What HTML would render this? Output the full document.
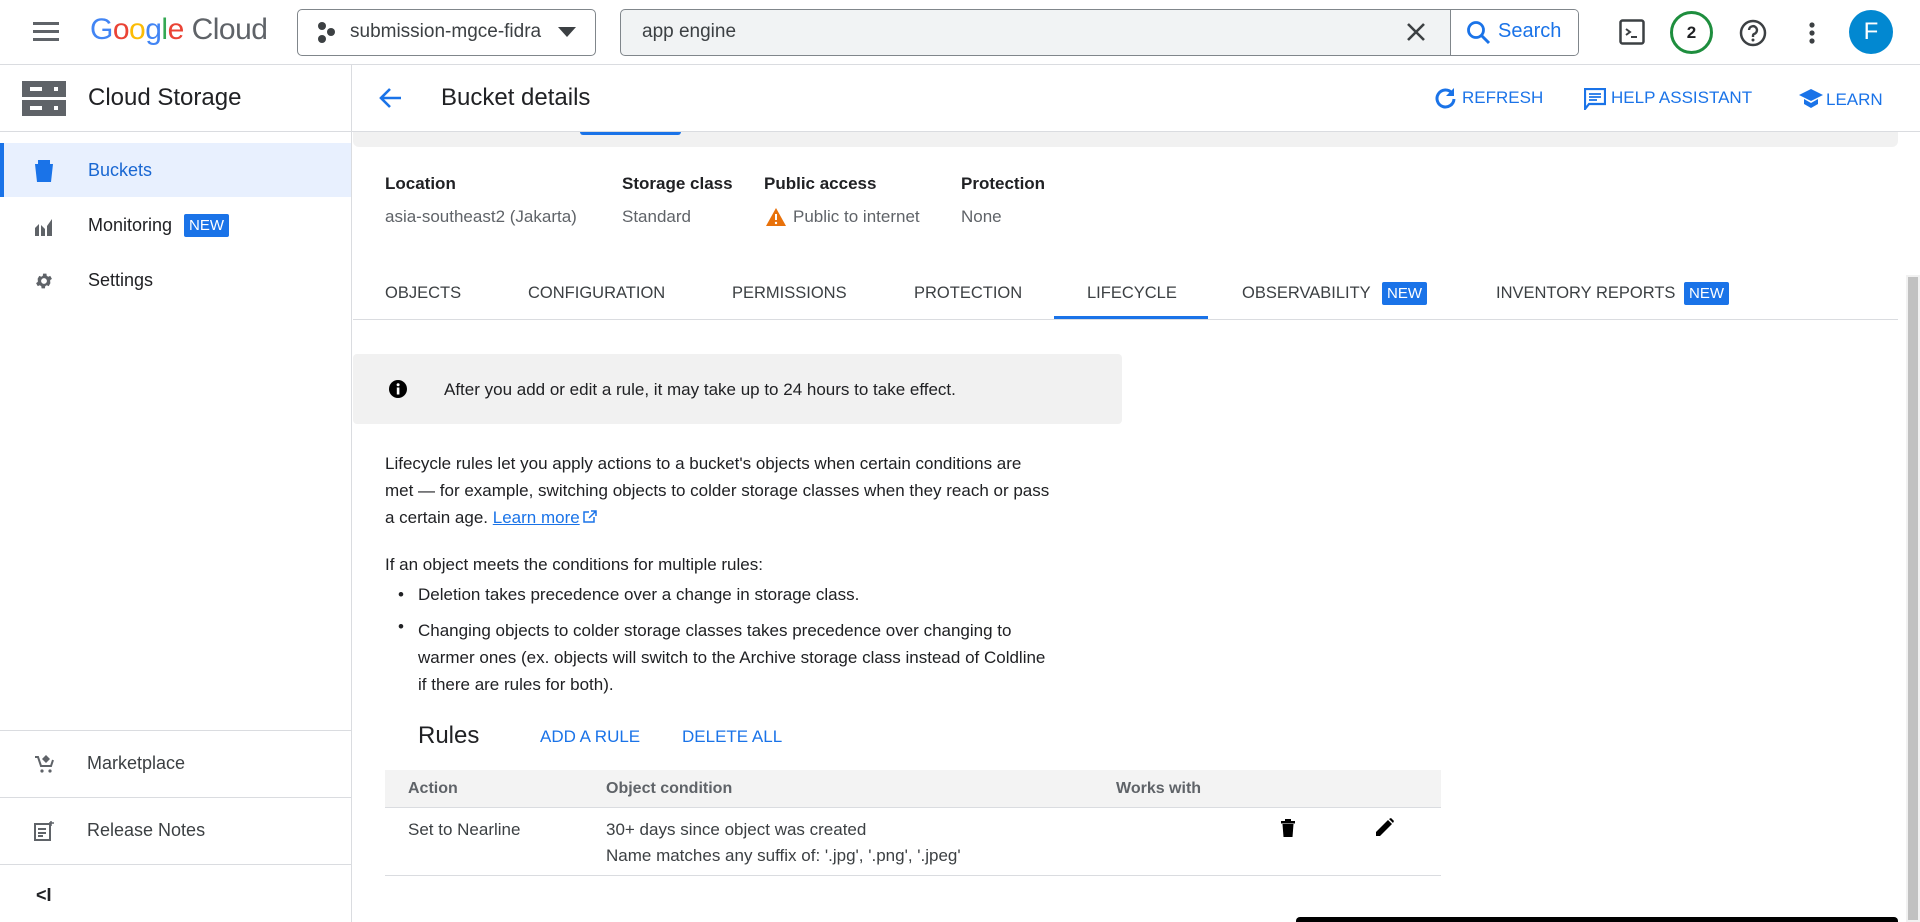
<!DOCTYPE html>
<html><head><meta charset="utf-8"><style>
*{box-sizing:border-box;margin:0;padding:0}
body{width:1920px;height:922px;overflow:hidden;background:#fff;font-family:"Liberation Sans",Arial,sans-serif;color:#202124;position:relative}
.a{position:absolute;white-space:nowrap}
.blue{color:#1a73e8}
.hl{background:#dadce0;position:absolute;height:1px}
.lab{font-size:17px;font-weight:bold;color:#202124}
.val{font-size:17px;color:#5f6368}
.tab{font-size:16.5px;color:#3c4043;top:284px}
.new{background:#1a73e8;color:#fff;font-size:15px;padding:3px 5px;border-radius:2px}
.p{font-size:17px;color:#202124}
</style></head><body>
<div class="hl" style="left:0;top:64px;width:1920px"></div>
<svg class="a" style="left:33px;top:20px" width="26" height="22" viewBox="0 0 26 22"><rect y="2" width="26" height="3" fill="#5f6368"/><rect y="10" width="26" height="3" fill="#5f6368"/><rect y="18" width="26" height="3" fill="#5f6368"/></svg>
<div class="a" style="left:90px;top:13px;font-size:30px;letter-spacing:-0.5px"><span style="color:#4285f4">G</span><span style="color:#ea4335">o</span><span style="color:#fbbc05">o</span><span style="color:#4285f4">g</span><span style="color:#34a853">l</span><span style="color:#ea4335">e</span><span style="color:#5f6368"> Cloud</span></div>
<div class="a" style="left:297px;top:9px;width:299px;height:47px;border:1px solid #80868b;border-radius:5px"></div>
<svg class="a" style="left:317px;top:20px" width="20" height="26"><circle cx="5" cy="6" r="4" fill="#3c4043"/><circle cx="14" cy="12" r="4" fill="#3c4043"/><circle cx="5" cy="19" r="4" fill="#3c4043"/></svg>
<div class="a" style="left:350px;top:21px;font-size:19px;color:#3c4043">submission-mgce-fidra</div>
<svg class="a" style="left:558px;top:27px" width="18" height="10"><path d="M0 0h18L9 10z" fill="#3c4043"/></svg>
<div class="a" style="left:620px;top:9px;width:959px;height:47px;border:1px solid #80868b;border-radius:5px;background:#f1f3f4;overflow:hidden"><div style="position:absolute;left:829px;top:0;width:130px;height:47px;background:#fff;border-left:1px solid #80868b"></div></div>
<div class="a" style="left:642px;top:21px;font-size:19px;color:#3c4043">app engine</div>
<svg class="a" style="left:1407px;top:23px" width="18" height="18"><path d="M1 1L17 17M17 1L1 17" stroke="#3c4043" stroke-width="2.6"/></svg>
<svg class="a" style="left:1466px;top:20px" width="26" height="26"><circle cx="10" cy="10" r="7.5" stroke="#1a73e8" stroke-width="2.8" fill="none"/><path d="M15 15l8 8" stroke="#1a73e8" stroke-width="3"/></svg>
<div class="a blue" style="left:1498px;top:20px;font-size:20px">Search</div>
<svg class="a" style="left:1619px;top:19px" width="26" height="26"><rect x="1.5" y="1.5" width="23" height="23" rx="2" stroke="#3c4043" stroke-width="2.5" fill="none"/><path d="M7 10l4 3-4 3M12 18h6" stroke="#3c4043" stroke-width="2" fill="none"/></svg>
<div class="a" style="left:1670px;top:11px;width:43px;height:43px;border:3px solid #1e8e3e;border-radius:50%;text-align:center;line-height:37px;font-size:17px;font-weight:bold">2</div>
<svg class="a" style="left:1739px;top:19px" width="28" height="28"><circle cx="14" cy="14" r="12" stroke="#3c4043" stroke-width="2.5" fill="none"/><path d="M10 11a4 4 0 1 1 5 4c-1 .5-1 1-1 3" stroke="#3c4043" stroke-width="2.4" fill="none"/><circle cx="14" cy="21" r="1.5" fill="#3c4043"/></svg>
<svg class="a" style="left:1808px;top:21px" width="8" height="24"><circle cx="4" cy="4" r="2.6" fill="#3c4043"/><circle cx="4" cy="12" r="2.6" fill="#3c4043"/><circle cx="4" cy="20" r="2.6" fill="#3c4043"/></svg>
<div class="a" style="left:1849px;top:10px;width:44px;height:44px;border-radius:50%;background:#0288d1;color:#fff;text-align:center;line-height:44px;font-size:24px">F</div>
<div class="a" style="left:351px;top:64px;width:1px;height:858px;background:#dadce0"></div>
<svg class="a" style="left:22px;top:81px" width="44" height="35"><rect width="44" height="16" fill="#5f6368"/><rect y="19" width="44" height="16" fill="#5f6368"/><rect x="8" y="6" width="12" height="4" fill="#fff"/><rect x="32" y="6" width="4" height="4" fill="#fff"/><rect x="8" y="25" width="12" height="4" fill="#fff"/><rect x="32" y="25" width="4" height="4" fill="#fff"/></svg>
<div class="a" style="left:88px;top:84px;font-size:24px">Cloud Storage</div>
<div class="hl" style="left:0;top:131px;width:351px"></div>
<div class="a" style="left:0;top:143px;width:351px;height:54px;background:#e8f0fe;border-left:4px solid #1a73e8"></div>
<svg class="a" style="left:34px;top:160px" width="20" height="22"><path d="M4 0h12v4h3l-2 18H3L1 4h3z" fill="#1a73e8"/></svg>
<div class="a" style="left:88px;top:160px;font-size:18px;color:#1967d2">Buckets</div>
<svg class="a" style="left:34px;top:216px" width="20" height="20"><path d="M1 20V12l4-4v12M7 20V9l4 4v7M13 20V10l5-7v17" fill="#5f6368"/></svg>
<div class="a" style="left:88px;top:215px;font-size:18px">Monitoring</div>
<div class="a new" style="left:184px;top:214px">NEW</div>
<svg class="a" style="left:34px;top:271px" width="20" height="20" viewBox="0 0 24 24"><path d="M19.4 13a7.5 7.5 0 0 0 0-2l2.1-1.6-2-3.5-2.5 1a7 7 0 0 0-1.7-1l-.4-2.7h-4l-.4 2.7a7 7 0 0 0-1.7 1l-2.5-1-2 3.5L4.6 11a7.5 7.5 0 0 0 0 2l-2.1 1.6 2 3.5 2.5-1a7 7 0 0 0 1.700 1l.4 2.7h4l.4-2.7a7 7 0 0 0 1.7-1l2.5 1 2-3.5zM12 15.5a3.5 3.5 0 1 1 0-7 3.5 3.5 0 0 1 0 7z" fill="#5f6368"/></svg>
<div class="a" style="left:88px;top:270px;font-size:18px">Settings</div>
<div class="hl" style="left:0;top:730px;width:351px"></div>
<svg class="a" style="left:34px;top:754px" width="20" height="20"><path d="M1 3h3l3 9h10l2-6" stroke="#5f6368" stroke-width="2" fill="none"/><path d="M12 1l4 4-4 4-4-4z" fill="#5f6368"/><circle cx="8" cy="17" r="1.6" fill="#5f6368"/><circle cx="16" cy="17" r="1.6" fill="#5f6368"/></svg>
<div class="a" style="left:87px;top:753px;font-size:18px;color:#3c4043">Marketplace</div>
<div class="hl" style="left:0;top:797px;width:351px"></div>
<svg class="a" style="left:34px;top:821px" width="20" height="20"><rect x="1" y="3" width="15" height="16" stroke="#5f6368" stroke-width="2" fill="none"/><path d="M4 8h8M4 12h8M4 15h5" stroke="#5f6368" stroke-width="2"/><path d="M17 0v5M15 2h5" stroke="#5f6368" stroke-width="1.5"/></svg>
<div class="a" style="left:87px;top:820px;font-size:18px;color:#3c4043">Release Notes</div>
<div class="hl" style="left:0;top:864px;width:351px"></div>
<div class="a" style="left:36px;top:885px;font-size:18px;font-weight:bold">&lt;I</div>
<svg class="a" style="left:379px;top:87px" width="24" height="22"><path d="M22 11H3M11 2l-9 9 9 9" stroke="#1a73e8" stroke-width="2.6" fill="none"/></svg>
<div class="a" style="left:441px;top:84px;font-size:24px">Bucket details</div>
<svg class="a" style="left:1434px;top:87px" width="22" height="22"><path d="M18 6a8.5 8.5 0 1 0 2 6" stroke="#1a73e8" stroke-width="3" fill="none"/><path d="M20 1v8h-8z" fill="#1a73e8"/></svg>
<div class="a blue" style="left:1462px;top:88px;font-size:17px">REFRESH</div>
<svg class="a" style="left:1584px;top:88px" width="22" height="22"><path d="M1 1h20v15H5l-4 5z" stroke="#1a73e8" stroke-width="2.2" fill="none"/><path d="M5 6h12M5 9h12M5 12h8" stroke="#1a73e8" stroke-width="1.8"/></svg>
<div class="a blue" style="left:1611px;top:88px;font-size:17px">HELP ASSISTANT</div>
<svg class="a" style="left:1799px;top:89px" width="24" height="20"><path d="M12 0l12 6-12 6L0 6z" fill="#1a73e8"/><path d="M5 10v5l7 4 7-4v-5l-7 4z" fill="#1a73e8"/></svg>
<div class="a blue" style="left:1826px;top:90px;font-size:17px">LEARN</div>
<div class="hl" style="left:352px;top:131px;width:1568px"></div>
<div class="a" style="left:353px;top:132px;width:1545px;height:15px;background:#f1f1f1;border-radius:0 0 6px 6px"></div>
<div class="a" style="left:580px;top:132px;width:101px;height:3px;background:#1a73e8;border-radius:0 0 3px 3px"></div>
<div class="a" style="left:1906px;top:275px;width:14px;height:647px;background:#f1f1f1"><div style="margin:2px;height:643px;background:#c1c1c1"></div></div>
<div class="a lab" style="left:385px;top:174px">Location</div>
<div class="a lab" style="left:622px;top:174px">Storage class</div>
<div class="a lab" style="left:764px;top:174px">Public access</div>
<div class="a lab" style="left:961px;top:174px">Protection</div>
<div class="a val" style="left:385px;top:207px">asia-southeast2 (Jakarta)</div>
<div class="a val" style="left:622px;top:207px">Standard</div>
<svg class="a" style="left:766px;top:208px" width="20" height="18"><path d="M10 0l10 18H0z" fill="#e8710a"/><path d="M10 6v6" stroke="#fff" stroke-width="2"/><circle cx="10" cy="15" r="1.2" fill="#fff"/></svg>
<div class="a val" style="left:793px;top:207px">Public to internet</div>
<div class="a val" style="left:961px;top:207px">None</div>
<div class="a tab" style="left:385px">OBJECTS</div>
<div class="a tab" style="left:528px">CONFIGURATION</div>
<div class="a tab" style="left:732px">PERMISSIONS</div>
<div class="a tab" style="left:914px">PROTECTION</div>
<div class="a tab blue" style="left:1087px">LIFECYCLE</div>
<div class="a tab" style="left:1242px">OBSERVABILITY</div>
<div class="a new" style="left:1382px;top:282px">NEW</div>
<div class="a tab" style="left:1496px">INVENTORY REPORTS</div>
<div class="a new" style="left:1684px;top:282px">NEW</div>
<div class="hl" style="left:353px;top:319px;width:1545px"></div>
<div class="a" style="left:1054px;top:316px;width:154px;height:3px;background:#1a73e8"></div>
<div class="a" style="left:353px;top:354px;width:769px;height:70px;background:#f1f1f1;border-radius:4px"></div>
<svg class="a" style="left:389px;top:380px" width="18" height="18"><circle cx="9" cy="9" r="9" fill="#000"/><rect x="7.8" y="7.5" width="2.6" height="7" fill="#fff"/><circle cx="9.1" cy="4.7" r="1.5" fill="#fff"/></svg>
<div class="a p" style="left:444px;top:380px">After you add or edit a rule, it may take up to 24 hours to take effect.</div>
<div class="a p" style="left:385px;top:450px;line-height:27px">Lifecycle rules let you apply actions to a bucket's objects when certain conditions are<br>met — for example, switching objects to colder storage classes when they reach or pass<br>a certain age. <span style="color:#1a73e8;text-decoration:underline">Learn more</span><svg width="16" height="14" style="vertical-align:-1px;margin-left:2px"><path d="M7 2H2v10h10V7M9 1h5v5M14 1L7 8" stroke="#1a73e8" stroke-width="1.5" fill="none"/></svg></div>
<div class="a p" style="left:385px;top:555px">If an object meets the conditions for multiple rules:</div>
<div class="a p" style="left:398px;top:585px">•</div>
<div class="a p" style="left:418px;top:585px">Deletion takes precedence over a change in storage class.</div>
<div class="a p" style="left:398px;top:617px">•</div>
<div class="a p" style="left:418px;top:617px;line-height:27px">Changing objects to colder storage classes takes precedence over changing to<br>warmer ones (ex. objects will switch to the Archive storage class instead of Coldline<br>if there are rules for both).</div>
<div class="a" style="left:418px;top:722px;font-size:24px">Rules</div>
<div class="a blue" style="left:540px;top:727px;font-size:17px">ADD A RULE</div>
<div class="a blue" style="left:682px;top:727px;font-size:17px">DELETE ALL</div>
<div class="a" style="left:385px;top:770px;width:1056px;height:38px;background:#f3f3f3;border-bottom:1px solid #dadce0"></div>
<div class="a" style="left:408px;top:780px;font-size:16px;color:#5f6368;font-weight:bold">Action</div>
<div class="a" style="left:606px;top:780px;font-size:16px;color:#5f6368;font-weight:bold">Object condition</div>
<div class="a" style="left:1116px;top:780px;font-size:16px;color:#5f6368;font-weight:bold">Works with</div>
<div class="a val" style="left:408px;top:820px;color:#3c4043">Set to Nearline</div>
<div class="a val" style="left:606px;top:820px;color:#3c4043">30+ days since object was created</div>
<div class="a val" style="left:606px;top:846px;color:#3c4043">Name matches any suffix of: '.jpg', '.png', '.jpeg'</div>
<svg class="a" style="left:1281px;top:819px" width="14" height="18"><rect x="0" y="2" width="14" height="2.5" fill="#000"/><rect x="4" y="0" width="6" height="3" fill="#000"/><path d="M1.5 5h11l-1 13h-9z" fill="#000"/></svg>
<svg class="a" style="left:1376px;top:818px" width="18" height="18"><path d="M0 18v-4L12 2l4 4L4 18z" fill="#000"/><path d="M13 1l2-1 3 3-1 2z" fill="#000"/></svg>
<div class="hl" style="left:385px;top:875px;width:1056px"></div>
<div class="a" style="left:1296px;top:917px;width:602px;height:5px;background:#000;border-radius:4px 4px 0 0"></div>
</body></html>
